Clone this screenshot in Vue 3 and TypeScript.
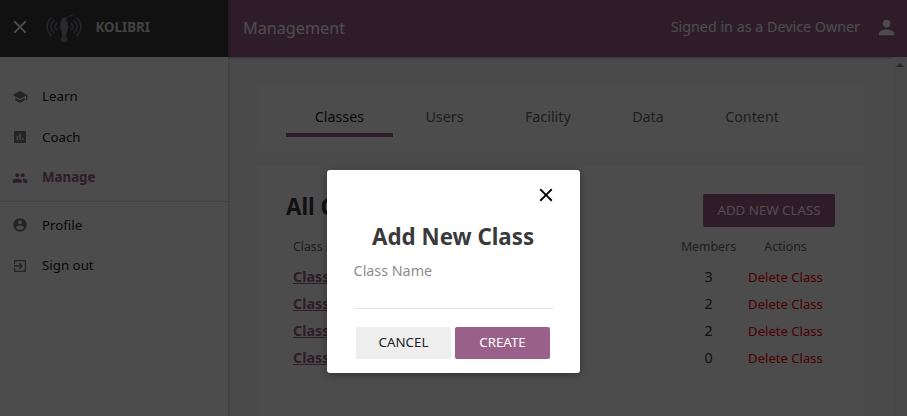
<script setup lang="ts">
interface NavItem {
  label: string
  icon: string
  active?: boolean
}

interface ClassRow {
  name: string
  members: number
}

const mainNav: NavItem[] = [
  { label: 'Learn', icon: 'M5 13.18v4L12 21l7-3.82v-4L12 17l-7-3.82zM12 3L1 9l11 6 9-4.91V17h2V9L12 3z' },
  { label: 'Coach', icon: 'M19 3H5c-1.1 0-2 .9-2 2v14c0 1.1.9 2 2 2h14c1.1 0 2-.9 2-2V5c0-1.1-.9-2-2-2zM9 17H7v-7h2v7zm4 0h-2V7h2v10zm4 0h-2v-4h2v4z' },
  { label: 'Manage', active: true, icon: 'M16 11c1.66 0 2.99-1.34 2.99-3S17.66 5 16 5c-1.66 0-3 1.34-3 3s1.34 3 3 3zm-8 0c1.66 0 2.99-1.34 2.99-3S9.66 5 8 5C6.34 5 5 6.34 5 8s1.34 3 3 3zm0 2c-2.33 0-7 1.17-7 3.5V19h14v-2.5c0-2.33-4.67-3.5-7-3.5zm8 0c-.29 0-.62.02-.97.05 1.16.84 1.97 1.97 1.97 3.45V19h6v-2.5c0-2.33-4.67-3.5-7-3.5z' },
]

const userNav: NavItem[] = [
  { label: 'Profile', icon: 'M12 2C6.48 2 2 6.48 2 12s4.48 10 10 10 10-4.48 10-10S17.52 2 12 2zm0 3c1.66 0 3 1.34 3 3s-1.34 3-3 3-3-1.34-3-3 1.34-3 3-3zm0 14.2c-2.5 0-4.71-1.28-6-3.22.03-1.99 4-3.08 6-3.08 1.99 0 5.97 1.09 6 3.08-1.29 1.94-3.5 3.22-6 3.22z' },
  { label: 'Sign out', icon: 'M10.09 15.59L11.5 17l5-5-5-5-1.41 1.41L12.67 11H3v2h9.67l-2.58 2.59zM19 3H5c-1.11 0-2 .9-2 2v4h2V5h14v14H5v-4H3v4c0 1.1.89 2 2 2h14c1.1 0 2-.9 2-2V5c0-1.1-.9-2-2-2z' },
]

const closePath = 'M19 6.41L17.59 5 12 10.59 6.41 5 5 6.41 10.59 12 5 17.59 6.41 19 12 13.41 17.59 19 19 17.59 13.41 12z'

const tabs = ['Classes', 'Users', 'Facility', 'Data', 'Content']

const classes: ClassRow[] = [
  { name: 'Class A', members: 3 },
  { name: 'Class B', members: 2 },
  { name: 'Class C', members: 2 },
  { name: 'Class D', members: 0 },
]
</script>

<template>
  <div class="screen">
    <aside class="sidebar">
      <div class="brand">
        <svg class="close" viewBox="0 0 24 24"><path :d="closePath" /></svg>
        <svg class="logo" viewBox="0 0 36 30">
          <g class="waves">
            <path d="M5.500 3.500Q-3.500 12.700 5.500 22M8.300 6.200Q1.500 12.700 8.300 19.200M11 9Q7.200 12.700 11 16.400" />
            <path d="M30.500 3.500Q39.500 12.700 30.500 22M27.700 6.200Q34.500 12.700 27.700 19.200M25 9Q28.800 12.700 25 16.400" />
          </g>
          <path class="beak" d="M20 4.500Q22.500 2 27 .6" />
          <path class="bird" d="M15.500 6Q16 3.500 18.500 3.500Q21 3.700 20.500 7Q22.600 9.500 22 15L20 21H16.500L14.300 15Q13.500 10 15.500 6Z" />
          <path class="tail" d="M16.500 20.500H20L21.800 27L18.200 28.500L14.600 27Z" />
        </svg>
        <span class="brand-name">KOLIBRI</span>
      </div>
      <nav class="nav">
        <a v-for="item in mainNav" :key="item.label" class="nav-item" :class="{ active: item.active }">
          <svg viewBox="0 0 24 24"><path :d="item.icon" /></svg><span>{{ item.label }}</span>
        </a>
        <div class="divider"></div>
        <a v-for="item in userNav" :key="item.label" class="nav-item">
          <svg viewBox="0 0 24 24"><path :d="item.icon" /></svg><span>{{ item.label }}</span>
        </a>
      </nav>
    </aside>

    <div class="main">
      <header class="appbar">
        <span class="title">Management</span>
        <span class="signed">Signed in as a Device Owner</span>
        <svg class="person" viewBox="0 0 24 24"><path d="M12 12c2.21 0 4-1.79 4-4s-1.79-4-4-4-4 1.790-4 4 1.790 4 4 4zm0 2c-2.670 0-8 1.340-8 4v2h16v-2c0-2.660-5.330-4-8-4z" /></svg>
      </header>
      <div class="body">
        <div class="content">
          <div class="tabs">
            <a v-for="(tab, i) in tabs" :key="tab" class="tab" :class="{ selected: i === 0 }">{{ tab }}</a>
          </div>
          <section class="card">
            <div class="card-head">
              <h1>All Classes</h1>
              <button class="add">ADD NEW CLASS</button>
            </div>
            <div class="row head">
              <span>Class Name</span><span class="mid">Members</span><span class="mid">Actions</span>
            </div>
            <div v-for="row in classes" :key="row.name" class="row">
              <a class="name">{{ row.name }}</a>
              <span class="mid count">{{ row.members }}</span>
              <span class="mid delete">Delete Class</span>
            </div>
          </section>
        </div>
        <div class="scrollbar"><i></i></div>
      </div>
    </div>

    <div class="overlay">
      <div class="modal">
        <svg class="modal-close" viewBox="0 0 24 24"><path :d="closePath" /></svg>
        <h2>Add New Class</h2>
        <label>Class Name</label>
        <div class="field"></div>
        <div class="actions">
          <button class="cancel">CANCEL</button>
          <button class="create">CREATE</button>
        </div>
      </div>
    </div>
  </div>
</template>

<style>
body {
  overflow: hidden;
}
</style>

<style scoped>
* {
  box-sizing: border-box;
}
.screen {
  position: relative;
  display: flex;
  width: 907px;
  height: 416px;
  overflow: hidden;
  font: 14.3px/20px "Noto Sans", sans-serif;
  color: #3a3a3a;
  background: #f9f9f9;
}
svg {
  fill: currentColor;
  flex: none;
}
button {
  border: 0;
  padding: 0;
  border-radius: 2px;
  font: 13.3px/20px "Noto Sans", sans-serif;
}
.sidebar {
  width: 228px;
  flex: none;
  background: #fff;
  box-shadow: 0 0 2px 1px rgba(0, 0, 0, 0.2);
  z-index: 1;
}
.brand {
  display: flex;
  align-items: center;
  height: 57px;
  padding: 0 0 3px 9px;
  background: #3a3a3a;
  color: #fff;
}
.close {
  width: 22px;
  height: 22px;
}
.logo {
  width: 36px;
  height: 30px;
  margin-left: 15px;
  margin-top: 4px;
}
.waves {
  fill: none;
  stroke: #77718a;
  stroke-width: 1.8;
}
.beak {
  fill: none;
  stroke: #7d8787;
}
.bird {
  fill: #82918f;
}
.tail {
  fill: #8c7d98;
}
.brand-name {
  margin-left: 13.5px;
  font-size: 13.3px;
  font-weight: 700;
  color: #dcdcdc;
}
.nav {
  padding-top: 19px;
  color: #1c1c1c;
}
.nav-item {
  display: flex;
  align-items: center;
  height: 40.5px;
  padding-left: 12px;
  font-size: 13.3px;
}
.nav-item svg {
  width: 16px;
  height: 16px;
  margin-top: 1px;
  color: #787878;
}
.nav-item span {
  margin-left: 14px;
}
.nav-item.active,
.nav-item.active svg {
  color: #996189;
  font-weight: 700;
}
.divider {
  height: 1px;
  margin: 3px 0;
  background: #e0e0e0;
}
.main {
  display: flex;
  flex: 1;
  flex-direction: column;
}
.appbar {
  display: flex;
  align-items: center;
  height: 57px;
  flex: none;
  padding: 0 9px 3px 15px;
  background: #996189;
  color: #fff;
  box-shadow: 0 1px 2px rgba(0, 0, 0, 0.3);
}
.title {
  flex: 1;
  padding-top: 2px;
  font-size: 16.2px;
}
.person {
  width: 23px;
  height: 23px;
  margin-left: 15px;
}
.body {
  display: flex;
  flex: 1;
}
.content {
  flex: 1;
  padding: 28px 29px 0;
}
.tabs {
  display: flex;
  gap: 4px;
  height: 66px;
  padding: 14px 29px;
  background: #fff;
}
.tab {
  height: 38px;
  padding: 8px 28.7px 0;
  color: #686868;
}
.tab.selected {
  color: #1c1c1c;
  border-bottom: 4px solid #996189;
}
.card {
  height: 300px;
  margin-top: 15px;
  padding: 28px 29px;
  background: #fff;
}
.card-head {
  display: flex;
  align-items: center;
  justify-content: space-between;
  height: 33px;
}
h1 {
  margin: 0 0 7px;
  font-size: 22.3px;
  line-height: 28px;
}
.add {
  width: 132px;
  height: 33px;
  padding-bottom: 1px;
  background: #996189;
  color: #fff;
}
.row {
  display: grid;
  grid-template-columns: 1fr 62px 92px;
  height: 27px;
  line-height: 27px;
  padding: 0 3.5px 0 7px;
}
.row.head {
  height: 36px;
  line-height: 39px;
  font-size: 12.3px;
  color: #686868;
}
.mid {
  text-align: center;
}
.name {
  font-weight: 700;
  color: #996189;
  text-decoration: underline;
}
.delete {
  padding-top: 1px;
  font-size: 13.1px;
  color: #f00;
}
.scrollbar {
  width: 14px;
  padding: 6px 3px;
  background: #f1f1f1;
}
.scrollbar i {
  display: block;
  width: 0;
  border: 4px solid transparent;
  border-top: 0;
  border-bottom-color: #858585;
}
.overlay {
  position: absolute;
  inset: 0;
  z-index: 2;
  background: rgba(0, 0, 0, 0.7);
  padding: 169.6px 0 0 326.6px;
}
.modal {
  display: flex;
  flex-direction: column;
  width: 253px;
  height: 203px;
  padding: 14px 27px;
  border-radius: 3px;
  background: #fff;
  box-shadow: 0 2px 8px rgba(0, 0, 0, 0.33);
}
.modal-close {
  width: 22px;
  height: 22px;
  margin-right: -4px;
  align-self: flex-end;
  color: #000;
}
h2 {
  margin: 16px 0 10px;
  font-size: 22.3px;
  line-height: 30px;
  text-align: center;
}
label {
  line-height: 18px;
  color: #8d8d8d;
}
.field {
  height: 29.4px;
  border-bottom: 1px solid #e0e0e0;
}
.actions {
  display: flex;
  gap: 4px;
  padding: 18px 0 0 2.4px;
}
.actions button {
  width: 95px;
  height: 32px;
  padding-bottom: 2px;
}
.cancel {
  background: #eee;
  color: #212121;
}
.create {
  background: #996189;
  color: #fff;
}
</style>
